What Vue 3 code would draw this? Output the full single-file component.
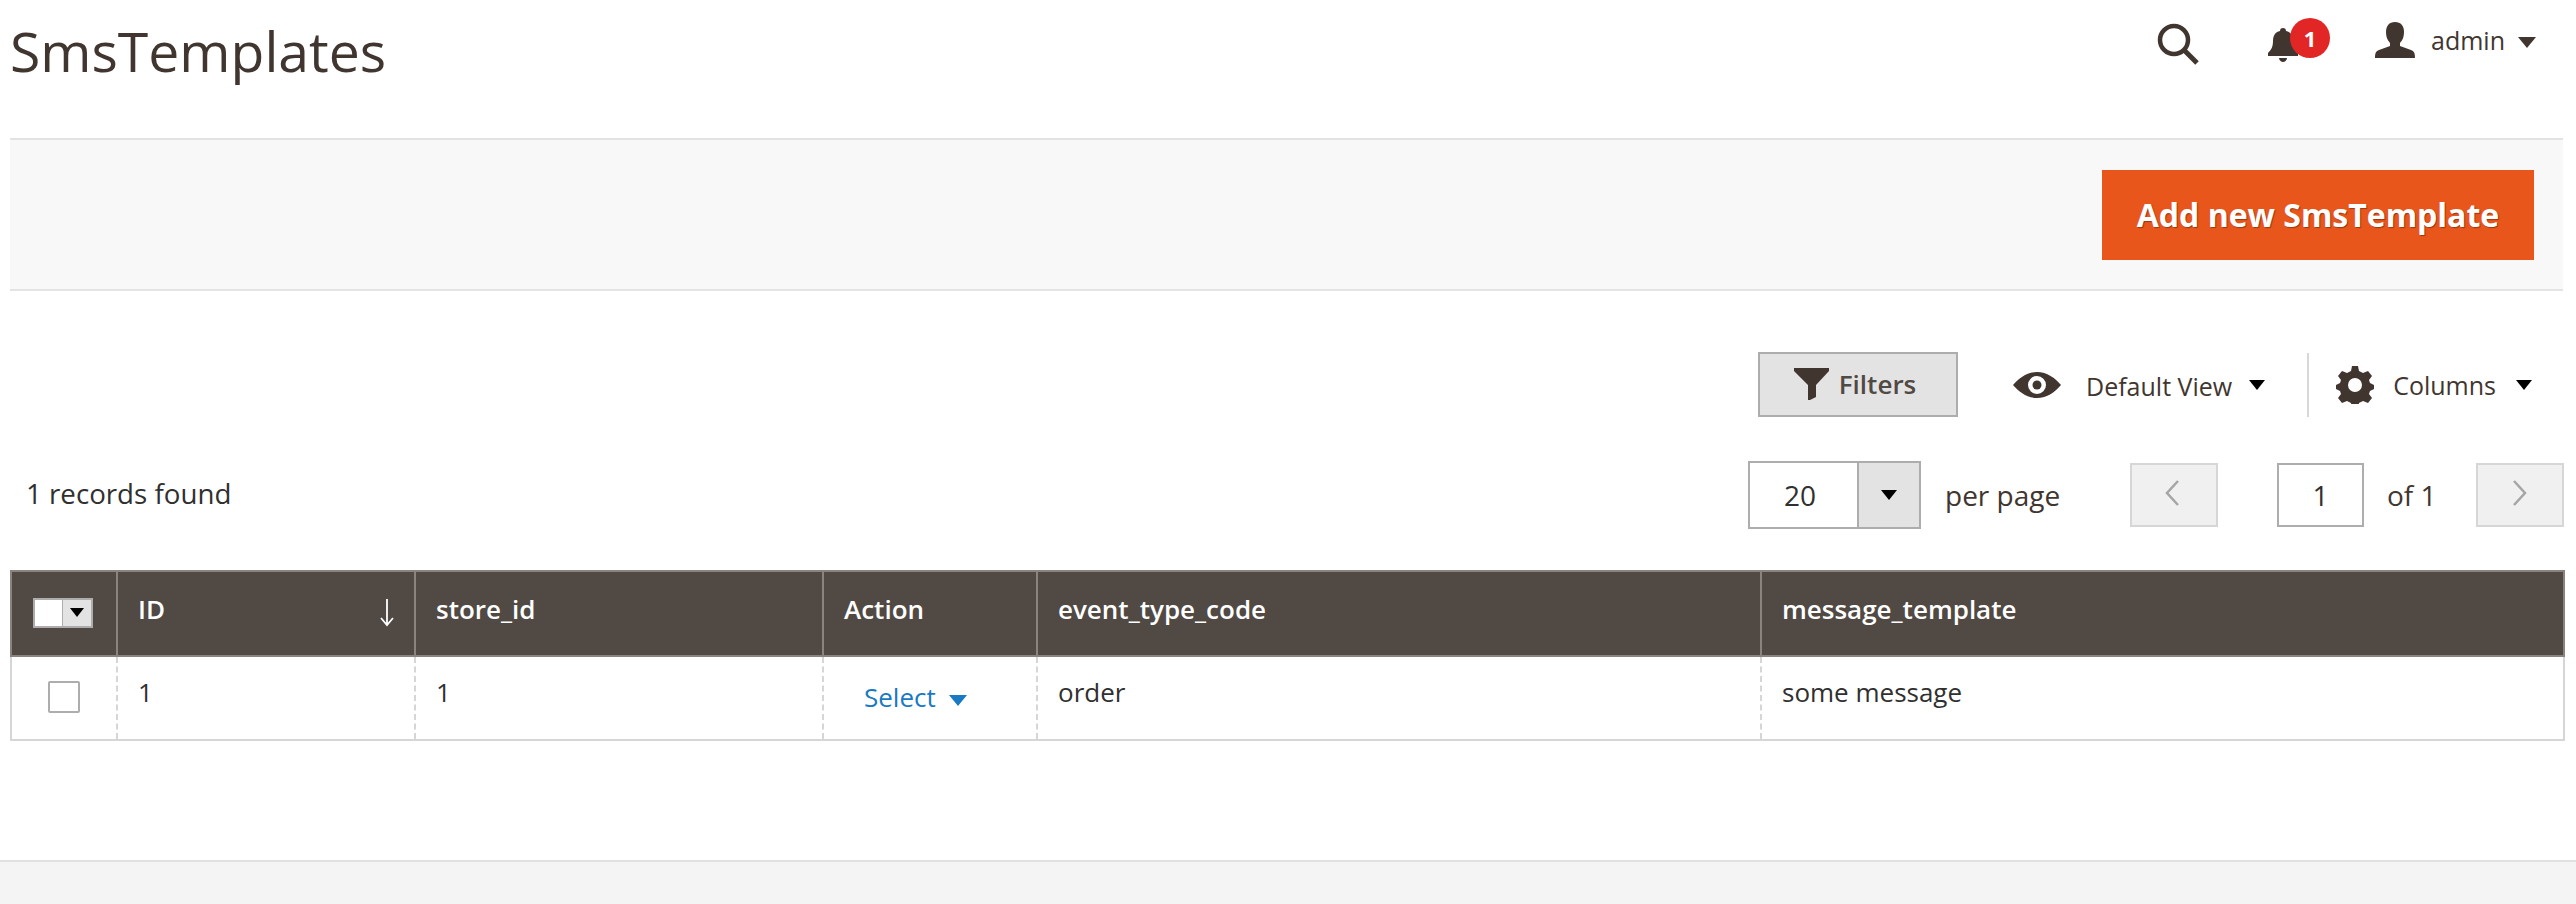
<template>
  <div class="page">
    <div class="content">
      <header class="page-header">
        <h1 class="title">SmsTemplates</h1>
        <div class="header-actions">
          <svg class="search-icon" viewBox="0 0 42 42" width="42" height="42">
            <circle cx="17" cy="17" r="14" fill="none" stroke="#41362f" stroke-width="4.5" />
            <path d="M27 27 L40 40" stroke="#41362f" stroke-width="5" fill="none" />
          </svg>
          <div class="bell">
            <svg viewBox="0 0 30 34" width="30" height="34">
              <path fill="#41362f" d="M15 0c2 0 3 1 3 3 5 1 7 5 7 10 0 6 2 9 5 12v3H0v-3c3-3 5-6 5-12 0-5 2-9 7-10 0-2 1-3 3-3z" />
              <path fill="#41362f" d="M11 30h8c0 2-2 4-4 4s-4-2-4-4z" />
            </svg>
            <span class="badge">1</span>
          </div>
          <svg class="user-icon" viewBox="0 0 40 36" width="40" height="36">
            <path fill="#41362f" d="M20 0c6 0 9 4 9 10 0 4-1 8-4 11v3l11 4c3 1 4 3 4 8H0c0-5 1-7 4-8l11-4v-3c-3-3-4-7-4-11 0-6 3-10 9-10z" />
          </svg>
          <span class="admin">admin</span>
          <span class="caret admin-caret"></span>
        </div>
      </header>

      <div class="action-bar">
        <button class="primary">Add new SmsTemplate</button>
      </div>

      <div class="toolbar">
        <button class="filters">
          <svg viewBox="0 0 35 32" width="35" height="32">
            <path fill="#41362f" d="M0 0h35v3L22 17v12l-8 4V17L0 3z" />
          </svg>
          Filters
        </button>
        <div class="view">
          <svg viewBox="0 0 48 26" width="48" height="26">
            <path fill="#41362f" fill-rule="evenodd" d="M24 0c10 0 18 6 24 13-6 7-14 13-24 13S6 20 0 13C6 6 14 0 24 0zm0 4a9 9 0 1 0 0 18 9 9 0 0 0 0-18z" />
            <circle cx="24" cy="13" r="4.5" fill="#41362f" />
          </svg>
          <span class="view-label">Default View</span>
          <span class="caret small black"></span>
        </div>
        <div class="separator"></div>
        <div class="columns">
          <svg viewBox="0 0 38 38" width="38" height="38">
            <path fill="#41362f" fill-rule="evenodd" d="M16 0h6l1 5 4 2 5-2 4 5-3 4 1 3 4 2v4l-4 2-1 3 3 4-4 5-5-2-4 2-1 5h-6l-1-5-4-2-5 2-4-5 3-4-1-3-4-2v-4l4-2 1-3-3-4 4-5 5 2 4-2zm3 12a7 7 0 1 0 0 14 7 7 0 0 0 0-14z" />
          </svg>
          <span class="columns-label">Columns</span>
          <span class="caret small black"></span>
        </div>
      </div>

      <div class="pager-row">
        <span class="records">1 records found</span>
        <div class="pager">
          <div class="per-page">
            <span class="per-value">20</span>
            <span class="per-toggle"><span class="caret small black"></span></span>
          </div>
          <span class="per-label">per page</span>
          <button class="page-btn prev">
            <svg viewBox="0 0 16 28" width="16" height="28"><path d="M14 2 L3 14 L14 26" fill="none" stroke="#a5a5a5" stroke-width="2.5" /></svg>
          </button>
          <span class="page-input">1</span>
          <span class="of-label">of 1</span>
          <button class="page-btn next">
            <svg viewBox="0 0 16 28" width="16" height="28"><path d="M2 2 L13 14 L2 26" fill="none" stroke="#a5a5a5" stroke-width="2.5" /></svg>
          </button>
        </div>
      </div>

      <table class="grid">
        <colgroup>
          <col v-for="w in colWidths" :key="w" :style="{ width: w + 'px' }" />
        </colgroup>
        <thead>
          <tr>
            <th class="check-col">
              <div class="mass-select">
                <span class="mass-box"></span>
                <span class="mass-toggle"><span class="caret tiny black"></span></span>
              </div>
            </th>
            <th class="sorted">
              <span>ID</span>
              <svg viewBox="0 0 14 28" width="14" height="28"><path d="M7 0v26M1 19l6 7 6-7" fill="none" stroke="#fff" stroke-width="1.8" /></svg>
            </th>
            <th v-for="h in headers" :key="h">{{ h }}</th>
          </tr>
        </thead>
        <tbody>
          <tr>
            <td class="check-col"><span class="row-check"></span></td>
            <td>1</td>
            <td>1</td>
            <td class="action-cell"><a class="select-link">Select<span class="caret blue"></span></a></td>
            <td>order</td>
            <td>some message</td>
          </tr>
        </tbody>
      </table>
    </div>
    <footer class="footer"></footer>
  </div>
</template>

<script setup>
const colWidths = [106, 298, 408, 214, 724, 803]
const headers = ['store_id', 'Action', 'event_type_code', 'message_template']
</script>

<style>
html, body {
  margin: 0;
  background: #fff;
}
</style>

<style scoped>
.page {
  width: 2576px;
  height: 904px;
  display: flex;
  flex-direction: column;
  font-family: "Open Sans", "Noto Sans", sans-serif;
  color: #303030;
  overflow: hidden;
}

.content {
  flex: 1;
  padding: 0 13px 0 10px;
}

.page-header {
  height: 138px;
  display: flex;
  justify-content: space-between;
}

.title {
  margin: 21px 0 0;
  font-size: 55.3px;
  line-height: 60px;
  font-weight: 400;
  color: #41362f;
}

.header-actions {
  display: flex;
  align-items: flex-start;
  padding-right: 27px;
}

.search-icon {
  margin: 23px 69px 0 0;
}

.bell {
  position: relative;
  margin: 28px 77px 0 0;
  width: 30px;
  height: 34px;
}

.badge {
  position: absolute;
  left: 22px;
  top: -10px;
  width: 40px;
  height: 40px;
  border-radius: 50%;
  background: #e22626;
  color: #fff;
  font-size: 22px;
  font-weight: 700;
  line-height: 40px;
  text-align: center;
}

.user-icon {
  margin: 22px 16px 0 0;
}

.admin {
  font-size: 25px;
  line-height: 36px;
  margin-top: 22px;
  color: #41362f;
}

.caret {
  display: inline-block;
  width: 0;
  height: 0;
  border-left: 9px solid transparent;
  border-right: 9px solid transparent;
  border-top: 11px solid #41362f;
}

.admin-caret {
  margin: 37px 0 0 13px;
}

.caret.small {
  border-left-width: 8px;
  border-right-width: 8px;
  border-top-width: 10px;
}

.caret.tiny {
  border-left-width: 7px;
  border-right-width: 7px;
  border-top-width: 9px;
}

.caret.black {
  border-top-color: #000;
}

.caret.blue {
  border-top-color: #1979c3;
}

.action-bar {
  height: 153px;
  box-sizing: border-box;
  border-top: 2px solid #e3e3e3;
  border-bottom: 2px solid #e3e3e3;
  background: #f8f8f8;
  display: flex;
  align-items: center;
  justify-content: flex-end;
  padding-right: 29px;
}

.primary {
  width: 432px;
  height: 90px;
  border: 0;
  background: #e8561c;
  color: #fff;
  font-family: inherit;
  font-size: 32px;
  font-weight: 700;
  text-shadow: 1px 1px 1px rgba(0, 0, 0, 0.35);
  padding: 0;
}

.toolbar {
  display: flex;
  justify-content: flex-end;
  align-items: center;
  padding-top: 61px;
  height: 65px;
}

.filters {
  width: 200px;
  height: 65px;
  box-sizing: border-box;
  border: 2px solid #adadad;
  background: #e3e3e3;
  display: flex;
  align-items: center;
  justify-content: center;
  gap: 10px;
  color: #514943;
  font-family: inherit;
  font-size: 26px;
  font-weight: 600;
  padding: 0 6px 2px 0;
}

.view {
  display: flex;
  align-items: center;
  margin-left: 55px;
}

.view-label {
  font-size: 25px;
  color: #41362f;
  margin: 2px 17px 0 25px;
}

.separator {
  width: 2px;
  height: 64px;
  background: #d8d8d8;
  margin: 0 27px 0 42px;
}

.columns {
  display: flex;
  align-items: center;
  margin-right: 31px;
}

.columns-label {
  font-size: 25px;
  color: #41362f;
  margin: 0 20px 0 19px;
}

.pager-row {
  display: flex;
  justify-content: space-between;
  align-items: center;
  margin-top: 44px;
  height: 68px;
}

.records {
  margin: -4px 0 0 16px;
  font-size: 27.7px;
  color: #303030;
}

.pager {
  display: flex;
  align-items: center;
  margin-right: -1px;
}

.per-page {
  width: 173px;
  height: 68px;
  box-sizing: border-box;
  border: 2px solid #adadad;
  display: flex;
  margin-right: 24px;
}

.per-value {
  width: 107px;
  box-sizing: border-box;
  padding-right: 7px;
  text-align: center;
  font-size: 28px;
  line-height: 64px;
}

.per-toggle {
  flex: 1;
  background: #e3e3e3;
  border-left: 2px solid #adadad;
  display: flex;
  align-items: center;
  justify-content: center;
}

.per-label {
  font-size: 28px;
  color: #41362f;
  width: 185px;
}

.page-btn {
  width: 88px;
  height: 64px;
  box-sizing: border-box;
  border: 2px solid #d6d6d6;
  background: #f0f0f0;
  padding: 0;
  display: flex;
  align-items: center;
  justify-content: center;
}

.prev svg {
  margin-left: -4px;
  margin-top: -4px;
}

.next svg {
  margin-top: -4px;
}

.page-input {
  width: 87px;
  height: 64px;
  box-sizing: border-box;
  border: 2px solid #adadad;
  margin-left: 59px;
  text-align: center;
  font-size: 28px;
  line-height: 60px;
}

.of-label {
  font-size: 28px;
  color: #41362f;
  width: 112px;
  padding-left: 23px;
  box-sizing: border-box;
}

.grid {
  width: 2553px;
  margin-top: 41px;
  border-collapse: collapse;
  table-layout: fixed;
  font-size: 26px;
}

.grid th {
  height: 85px;
  box-sizing: border-box;
  background: #514943;
  border: 2px solid #8a837f;
  color: #fff;
  text-align: left;
  font-weight: 600;
  padding: 0 20px 10px 20px;
}

.grid th.sorted {
  position: relative;
}

.grid th.sorted svg {
  position: absolute;
  right: 20px;
  top: 27px;
}

.grid td {
  height: 84px;
  box-sizing: border-box;
  border-left: 2px dashed #d6d6d6;
  border-right: 2px dashed #d6d6d6;
  border-bottom: 2px solid #d6d6d6;
  padding: 0 20px 12px 20px;
  color: #303030;
}

.grid td:first-child {
  border-left: 2px solid #d6d6d6;
}

.grid td:last-child {
  border-right: 2px solid #d6d6d6;
}

.grid .check-col {
  padding: 0;
  text-align: center;
}

.grid th.check-col {
  padding: 0 2px 8px 0;
}

.grid td.check-col {
  padding-bottom: 8px;
}

.mass-select {
  display: inline-flex;
  width: 60px;
  height: 30px;
  box-sizing: border-box;
  border: 2px solid #adadad;
  vertical-align: middle;
}

.mass-box {
  flex: 1;
  background: #fff;
}

.mass-toggle {
  width: 28px;
  background: #e3e3e3;
  border-left: 1px solid #adadad;
  display: flex;
  align-items: center;
  justify-content: center;
}

.row-check {
  display: inline-block;
  width: 32px;
  height: 32px;
  box-sizing: border-box;
  border: 2px solid #adadad;
  border-radius: 2px;
  vertical-align: middle;
}

.grid td.action-cell {
  padding: 0 0 2px 40px;
}

.select-link {
  color: #1979c3;
}

.select-link .caret {
  margin-left: 13px;
  vertical-align: middle;
}

.footer {
  height: 44px;
  box-sizing: border-box;
  border-top: 2px solid #e0e0e0;
  background: #f4f4f4;
}
</style>
